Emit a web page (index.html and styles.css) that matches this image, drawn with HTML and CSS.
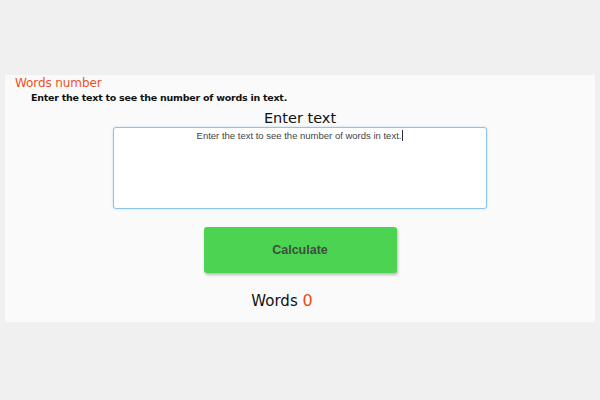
FILE: index.html
```html
<!DOCTYPE html>
<html>
<head>
<meta charset="utf-8">
<link rel="stylesheet" href="styles.css">
</head>
<body>
<div class="panel">
  <h1 class="title">Words number</h1>
  <p class="subtitle">Enter the text to see the number of words in text.</p>
  <h2 class="label">Enter text</h2>
  <div class="area">Enter the text to see the number of words in text.<span class="caret"></span></div>
  <button class="btn">Calculate</button>
  <div class="result">Words <span class="count">0</span></div>
</div>
</body>
</html>
```
FILE: styles.css
```css
html, body { margin: 0; padding: 0; }
body {
  background: #f0f0f0;
  width: 600px;
  height: 400px;
  font-family: "Comic Sans MS", "DejaVu Sans", sans-serif;
  padding-top: 75px;
  box-sizing: border-box;
}
.panel {
  margin: 0 5px;
  height: 247px;
  background: #fafafa;
  display: flex;
  flex-direction: column;
  align-items: stretch;
}
.title {
  margin: 0 0 0 10px;
  font-size: 12px;
  font-weight: normal;
  color: #f0501e;
  line-height: 16px;
  letter-spacing: -0.1px;
}
.subtitle {
  margin: 0 0 0 26px;
  font-size: 9.5px;
  font-weight: bold;
  color: #111;
  line-height: 14px;
  letter-spacing: -0.25px;
}
.label {
  margin: 4px 0 0 0;
  text-align: center;
  font-size: 14.5px;
  font-weight: normal;
  color: #111;
  line-height: 18px;
}
.area {
  align-self: center;
  width: 372px;
  height: 78px;
  background: #fff;
  border: 1px solid #8cc4ec;
  border-radius: 3px;
  box-shadow: 0 0 2px rgba(120,180,230,0.5);
  font-family: "Liberation Sans", Arial, sans-serif;
  font-size: 9.5px;
  color: #444;
  text-align: center;
  line-height: 12px;
  padding-top: 2px;
  box-sizing: content-box;
}
.caret {
  display: inline-block;
  width: 1px;
  height: 11px;
  background: #333;
  vertical-align: -2px;
  margin-left: 1px;
}
.btn {
  align-self: center;
  margin: 18px 0 0 0;
  width: 193px;
  height: 46px;
  background: #4bd351;
  border: none;
  border-radius: 3px;
  box-shadow: 1px 2px 3px rgba(0,0,0,0.25);
  font-family: "Liberation Sans", Arial, sans-serif;
  font-weight: bold;
  font-size: 12.5px;
  color: #3d4f3e;
}
.result {
  margin-top: 19px;
  text-align: center;
  margin-right: 36px;
  font-size: 15px;
  color: #111;
  line-height: 18px;
}
.count { color: #f04a10; font-size: 16px; }
```
